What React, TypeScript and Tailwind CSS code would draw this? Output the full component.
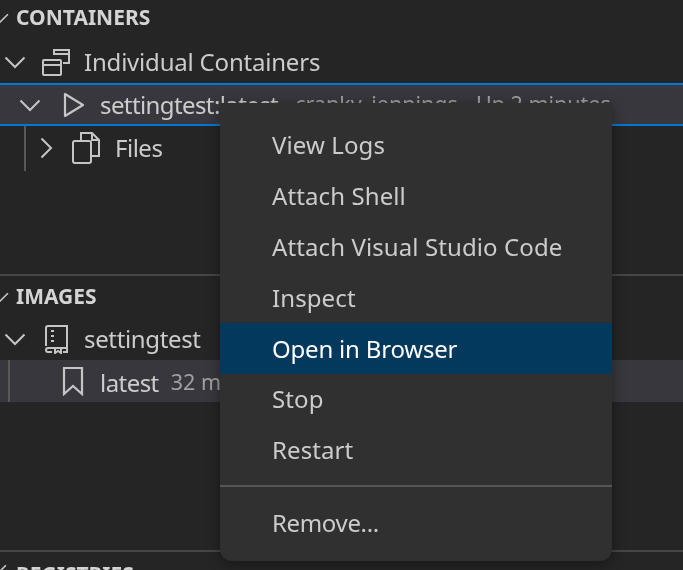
import React from "react";

const Down = ({ className = "" }: { className?: string }) => (
  <svg width="24" height="24" viewBox="0 0 24 24" fill="none" stroke="#c5c5c5" strokeWidth="2" className={className}>
    <path d="M2.5 7.5 12 17l9.5-9.5" />
  </svg>
);
const Right = () => (
  <svg width="24" height="24" viewBox="0 0 24 24" fill="none" stroke="#c5c5c5" strokeWidth="2">
    <path d="M7.5 2.5 17 12l-9.5 9.5" />
  </svg>
);
const Containers = () => (
  <svg width="30" height="30" viewBox="0 0 30 30" fill="none" stroke="#c5c5c5" strokeWidth="2">
    <path d="M13 8V3h15v13h-6" />
    <path d="M13 7h15" />
    <rect x="2" y="13" width="18" height="15" rx="1" />
    <path d="M2 18h18" />
  </svg>
);
const Play = () => (
  <svg width="24" height="28" viewBox="0 0 24 28" fill="none" stroke="#c5c5c5" strokeWidth="2.2" strokeLinejoin="round">
    <path d="M3 3v22l18-11z" />
  </svg>
);
const FilesIcon = () => (
  <svg width="30" height="34" viewBox="0 0 30 34" fill="none" stroke="#c5c5c5" strokeWidth="2">
    <path d="M10 10V2h11l7 7v16h-8" />
    <path d="M21 2v7h7" />
    <rect x="2" y="10" width="18" height="22" rx="2" />
  </svg>
);
const Repo = () => (
  <svg width="26" height="30" viewBox="0 0 26 30" fill="none" stroke="#c5c5c5" strokeWidth="2">
    <path d="M3 22V4a2 2 0 0 1 2-2h19v22H5a2 2 0 0 0-2 2 2 2 0 0 0 2 2h4" />
    <path d="M8 7h3M8 12h3M8 17h3" />
    <path d="M12 24v5l3-2 3 2v-5" />
    <path d="M20 28h4v-4" />
  </svg>
);
const Bookmark = () => (
  <svg width="24" height="30" viewBox="0 0 24 30" fill="none" stroke="#c5c5c5" strokeWidth="2.2">
    <path d="M3 2h18v26l-9-8-9 8z" />
  </svg>
);

const items = ["View Logs", "Attach Shell", "Attach Visual Studio Code", "Inspect", "Open in Browser", "Stop", "Restart"];

export default function App() {
  return (
    <div
      className="relative h-[570px] w-[683px] overflow-hidden bg-[#252526] text-[24px] text-[#cccccc] blur-[0.4px]"
      style={{ fontFamily: '"Noto Sans", "Open Sans", sans-serif' }}
    >
      <section className="flex h-[274px] flex-col">
        <div className="flex h-[41px] items-center pb-[6px] font-bold">
          <Down className="-ml-[12px] mr-[4px] h-[20px]" />
          <span className="text-[21px] text-[#d4d4d4]">CONTAINERS</span>
        </div>
        <div className="flex h-[42px] items-center pl-[3px]">
          <Down />
          <span className="ml-[14px] flex"><Containers /></span>
          <span className="ml-[13px] tracking-[-0.2px]">Individual Containers</span>
        </div>
        <div className="flex h-[43px] items-center border-y-2 border-[#0078d4] bg-[#37373d] pl-[18px]">
          <Down />
          <span className="ml-[20px] flex"><Play /></span>
          <span className="ml-[14px] whitespace-nowrap tracking-[-0.6px]">settingtest:latest</span>
          <span className="ml-[17px] whitespace-nowrap text-[21.5px] text-[#a0a0a0]">cranky_jennings - Up 2 minutes</span>
        </div>
        <div className="ml-[24px] flex h-[45px] items-center border-l-2 border-[#585858] pb-[2px] pl-[8px]">
          <Right />
          <span className="ml-[13px] flex"><FilesIcon /></span>
          <span className="ml-[14px] tracking-[-0.5px]">Files</span>
        </div>
      </section>

      <section className="flex h-[276px] flex-col border-t-2 border-[#464647]">
        <div className="flex h-[42px] items-center pb-[1px] font-bold">
          <Down className="-ml-[12px] mr-[4px] h-[20px]" />
          <span className="text-[21px] text-[#d4d4d4]">IMAGES</span>
        </div>
        <div className="flex h-[42px] items-center pl-[3px]">
          <Down />
          <span className="ml-[16px] flex"><Repo /></span>
          <span className="ml-[15px] tracking-[-0.35px]">settingtest</span>
        </div>
        <div className="flex h-[42px] items-center bg-[#37373d] pl-[8px]">
          <div className="h-full w-[2px] bg-[#585858]" />
          <span className="ml-[51px] flex"><Bookmark /></span>
          <span className="ml-[15px] pt-[3px] tracking-[-0.55px]">latest</span>
          <span className="ml-[12px] whitespace-nowrap pt-[3px] text-[21.5px] text-[#a0a0a0]">32 minutes ago</span>
        </div>
      </section>

      <section className="border-t-2 border-[#464647]">
        <div className="flex items-start pt-[7px] font-bold">
          <Down className="-ml-[14px] mr-[6px] h-[20px]" />
          <span className="text-[21px] text-[#d4d4d4]">REGISTRIES</span>
        </div>
      </section>

      <div className="absolute left-[220px] top-[103px] w-[392px] rounded-b-[12px] bg-[#303031] pb-[12px] pt-[17px] shadow-[0_3px_14px_rgba(0,0,0,0.4)]">
        {items.map((t) => (
          <div
            key={t}
            className={`flex h-[50.8px] items-center pl-[52px] ${
              t === "Open in Browser" ? "bg-[#04395e] tracking-[-0.2px] text-white" : "tracking-[0.1px]"
            }`}
          >
            {t}
          </div>
        ))}
        <div className="mb-[11px] mt-[9px] h-[2px] bg-[#565656]" />
        <div className="flex h-[51px] items-center pl-[52px] tracking-[-0.35px]">Remove...</div>
      </div>
    </div>
  );
}
